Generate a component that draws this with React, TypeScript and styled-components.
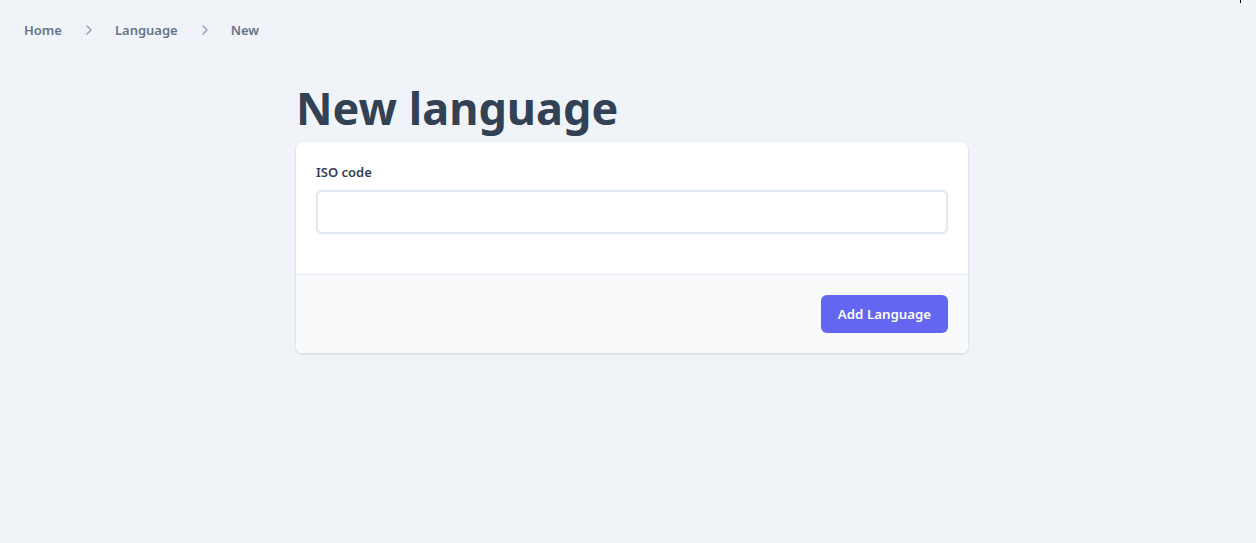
import React from "react";
import styled, { createGlobalStyle } from "styled-components";

const Global = createGlobalStyle`
  html, body { margin: 0; padding: 0; background: #f0f4f8; }
  body { font-family: "Noto Sans", "Open Sans", sans-serif; color: #334155; -webkit-font-smoothing: antialiased; }
  * { box-sizing: border-box; }
`;

const Page = styled.div`
  min-height: 543px;
  position: relative;
`;

const Tick = styled.span`
  position: absolute;
  top: 0;
  left: 1240px;
  width: 1px;
  height: 3px;
  background: #000;
`;

const Crumbs = styled.nav`
  display: flex;
  align-items: center;
  height: 60px;
  padding: 0 24px;
  font-size: 13px;
  font-weight: 600;
  color: #64748b;
`;

const Crumb = styled.a`
  color: inherit;
  text-decoration: none;
`;

const Sep = styled.svg`
  width: 8px;
  height: 12px;
  margin: 0 22px 0 23px;
  color: #94a3b8;
`;

const Main = styled.main`
  width: 672px;
  margin-left: calc(50% - 332px);
`;

const Title = styled.h1`
  margin: 24px 0 10px;
  font-size: 45px;
  line-height: 48px;
  font-weight: 700;
  color: #334155;
`;

const Card = styled.form`
  background: #fff;
  border-radius: 6px;
  box-shadow: 0 1px 3px rgba(0, 0, 0, 0.1), 0 1px 2px rgba(0, 0, 0, 0.06);
  overflow: hidden;
`;

const Body = styled.div`
  padding: 20px 20px 40px;
  display: flex;
  flex-direction: column;
  gap: 8px;
`;

const Label = styled.label`
  font-size: 13px;
  line-height: 20px;
  font-weight: 600;
  color: #334155;
`;

const Input = styled.input`
  height: 44px;
  border: 2px solid #e2e8f0;
  border-radius: 6px;
  background: #fff;
  padding: 0 12px;
  font: inherit;
  font-size: 16px;
  outline: none;
`;

const Footer = styled.div`
  border-top: 1px solid #e8edf5;
  background: #f8fafc;
  padding: 20px;
  display: flex;
  justify-content: flex-end;
`;

const Button = styled.button`
  width: 127px;
  height: 38px;
  padding: 0;
  border: 0;
  border-radius: 6px;
  background: #6366f1;
  color: #fff;
  font-family: inherit;
  font-size: 13.3px;
  font-weight: 600;
  cursor: pointer;
`;

const Chevron = () => (
  <Sep viewBox="0 0 8 12" fill="none" stroke="currentColor" strokeWidth="1.6" strokeLinecap="round" strokeLinejoin="round">
    <path d="M2 2l4 4-4 4" />
  </Sep>
);

export default function App() {
  return (
    <Page>
      <Global />
      <Tick />
      <Crumbs>
        <Crumb href="#">Home</Crumb>
        <Chevron />
        <Crumb href="#">Language</Crumb>
        <Chevron />
        <Crumb href="#">New</Crumb>
      </Crumbs>
      <Main>
        <Title>New language</Title>
        <Card onSubmit={(e) => e.preventDefault()}>
          <Body>
            <Label htmlFor="iso">ISO code</Label>
            <Input id="iso" type="text" />
          </Body>
          <Footer>
            <Button type="submit">Add Language</Button>
          </Footer>
        </Card>
      </Main>
    </Page>
  );
}
